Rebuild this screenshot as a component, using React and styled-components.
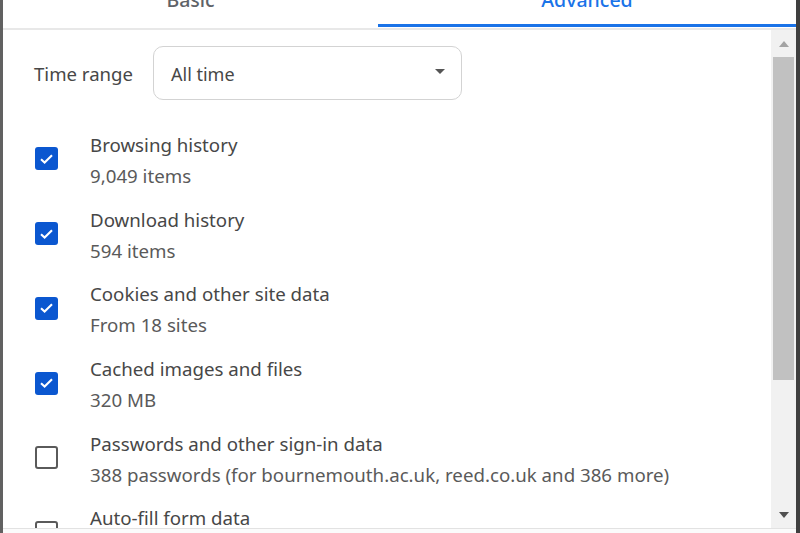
import React from "react";
import styled, { createGlobalStyle } from "styled-components";

const Global = createGlobalStyle`
  html, body { margin: 0; padding: 0; background: #fff; }
  body { font-family: "Noto Sans", "Open Sans", "Liberation Sans", sans-serif; }
  * { box-sizing: border-box; }
`;

const Frame = styled.div`
  width: 800px;
  height: 533px;
  display: flex;
  flex-direction: column;
  border-left: 3px solid #616161;
  border-right: 4px solid #3f3f3f;
  background: #fff;
  overflow: hidden;
`;

const TabBar = styled.div`
  display: flex;
  height: 30px;
  flex: none;
  border-bottom: 2px solid #e8e8e8;
`;

const Tab = styled.div`
  position: relative;
  width: ${(p) => (p.$w ? `${p.$w}px` : "auto")};
  flex: ${(p) => (p.$w ? "none" : "1")};
  display: flex;
  justify-content: center;
  align-items: flex-start;
  font-size: 19.5px;
  font-weight: 500;
  line-height: 19px;
  color: ${(p) => (p.$active ? "#1a73e8" : "#5f6368")};
  &::after {
    content: "";
    display: ${(p) => (p.$active ? "block" : "none")};
    position: absolute;
    left: 0;
    right: 0;
    bottom: 1px;
    height: 3px;
    background: #1a73e8;
  }
`;

const TabLabel = styled.span`
  margin-top: -10px;
`;

const Body = styled.div`
  flex: 1;
  display: flex;
  min-height: 0;
`;

const Content = styled.div`
  flex: 1;
  overflow: hidden;
  padding: 16px 0 0 31px;
`;

const RangeRow = styled.div`
  display: flex;
  align-items: center;
  height: 54px;
  gap: 19px;
`;

const RangeLabel = styled.span`
  font-size: 18.6px;
  color: #474747;
  width: 100px;
`;

const Select = styled.div`
  width: 309px;
  height: 54px;
  border: 1px solid #d3d3d3;
  border-radius: 10px;
  display: flex;
  align-items: center;
  justify-content: space-between;
  padding: 2px 16px 0 17px;
  font-size: 18px;
  color: #474747;
`;

const Caret = styled.span`
  width: 0;
  height: 0;
  border-left: 5px solid transparent;
  border-right: 5px solid transparent;
  border-top: 5px solid #555;
  margin-top: -5px;
`;

const List = styled.div`
  margin-top: 21.6px;
  display: flex;
  flex-direction: column;
`;

const Row = styled.div`
  height: 74.7px;
  display: flex;
  align-items: center;
  gap: 32px;
  flex: none;
`;

const Box = styled.span`
  width: 23px;
  height: 23px;
  margin-left: 1px;
  flex: none;
  border-radius: 3px;
  display: flex;
  align-items: center;
  justify-content: center;
  background: ${(p) => (p.$checked ? "#0b57d0" : "#fff")};
  border: ${(p) => (p.$checked ? "none" : "2px solid #5a5a5a")};
`;

const Texts = styled.div`
  display: flex;
  flex-direction: column;
  margin-top: 2px;
`;

const Title = styled.div`
  font-size: 18.7px;
  line-height: 31px;
  color: #474747;
  white-space: nowrap;
`;

const Sub = styled.div`
  font-size: 18.7px;
  line-height: 31px;
  color: #5a5a5a;
  white-space: nowrap;
`;

const Scrollbar = styled.div`
  width: 25px;
  flex: none;
  background: #f1f1f1;
  display: flex;
  flex-direction: column;
  padding: 0 2px;
`;

const Arrow = styled.div`
  height: 27px;
  flex: none;
  display: flex;
  align-items: center;
  justify-content: center;
`;

const Tri = styled.span`
  width: 0;
  height: 0;
  border-left: 5px solid transparent;
  border-right: 5px solid transparent;
  ${(p) =>
    p.$up
      ? "border-bottom: 6px solid #a3a3a3;"
      : "border-top: 6px solid #505050;"}
`;

const Track = styled.div`
  flex: 1;
  display: flex;
  flex-direction: column;
`;

const Thumb = styled.div`
  background: #c1c1c1;
  flex: none;
`;

const Footer = styled.div`
  height: 5px;
  flex: none;
  border-top: 1px solid #e2e2e2;
  background: #fbfbfb;
`;

const Check = () => (
  <svg width="15" height="12" viewBox="0 0 15 12">
    <path d="M2 6.3 L5.6 9.6 L13 2.2" fill="none" stroke="#fff" strokeWidth="2.1" />
  </svg>
);

const items = [
  { t: "Browsing history", s: "9,049 items", c: true },
  { t: "Download history", s: "594 items", c: true },
  { t: "Cookies and other site data", s: "From 18 sites", c: true },
  { t: "Cached images and files", s: "320 MB", c: true },
  {
    t: "Passwords and other sign-in data",
    s: "388 passwords (for bournemouth.ac.uk, reed.co.uk and 386 more)",
    c: false,
  },
  { t: "Auto-fill form data", s: "", c: false },
];

export default function App() {
  return (
    <>
      <Global />
      <Frame>
        <TabBar>
          <Tab $w={375}>
            <TabLabel>Basic</TabLabel>
          </Tab>
          <Tab $active>
            <TabLabel>Advanced</TabLabel>
          </Tab>
        </TabBar>
        <Body>
          <Content>
            <RangeRow>
              <RangeLabel>Time range</RangeLabel>
              <Select>
                <span>All time</span>
                <Caret />
              </Select>
            </RangeRow>
            <List>
              {items.map((it) => (
                <Row key={it.t}>
                  <Box $checked={it.c}>{it.c && <Check />}</Box>
                  <Texts>
                    <Title>{it.t}</Title>
                    <Sub>{it.s || "\u00a0"}</Sub>
                  </Texts>
                </Row>
              ))}
            </List>
          </Content>
          <Scrollbar>
            <Arrow>
              <Tri $up />
            </Arrow>
            <Track>
              <Thumb style={{ height: "323px" }} />
            </Track>
            <Arrow>
              <Tri />
            </Arrow>
          </Scrollbar>
        </Body>
        <Footer />
      </Frame>
    </>
  );
}
